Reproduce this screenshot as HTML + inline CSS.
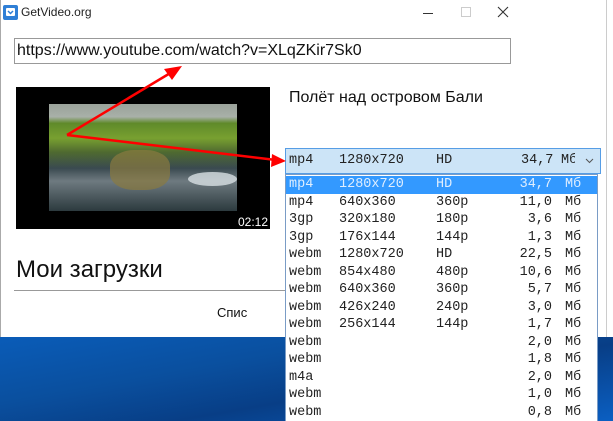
<!DOCTYPE html>
<html><head><meta charset="utf-8"><style>
*{margin:0;padding:0;box-sizing:border-box}
body{width:613px;height:421px;position:relative;overflow:hidden;background:#fff;font-family:"Liberation Sans",sans-serif}
.a{position:absolute;white-space:nowrap}
.desk{position:absolute;left:0;top:337px;width:613px;height:84px;background:linear-gradient(170deg,#0a5cb8 0%,#0a4f9e 35%,#083e86 60%,#0b5fc2 100%)}
.mono{font-family:"Liberation Mono",monospace;font-size:13.5px;color:#222}
.row{position:absolute;left:0;width:311px;height:17.5px;line-height:17.5px}
.row span{position:absolute}
</style></head><body>
<div class="desk"></div>
<div class="a" style="left:0;top:0;width:1px;height:337px;background:#aaa"></div>
<div class="a" style="left:606px;top:0;width:1px;height:337px;background:#ccc"></div>
<!-- title bar -->
<div class="a" style="left:3px;top:5px;width:15px;height:15px;background:#2f7fd6;border-radius:2px"></div>
<svg class="a" style="left:3px;top:5px" width="15" height="15"><rect x="3" y="3" width="9" height="8" fill="#fff" rx="1"/><path d="M5 6l2.5 2.5L10 6" stroke="#2f7fd6" stroke-width="1.5" fill="none"/></svg>
<div class="a" style="left:21px;top:5px;font-size:12px;color:#222">GetVideo.org</div>
<div class="a" style="left:423px;top:13px;width:10px;height:1px;background:#333"></div>
<div class="a" style="left:461px;top:7px;width:10px;height:10px;border:1px solid #ccc"></div>
<svg class="a" style="left:497px;top:6px" width="12" height="12"><path d="M1 1L11 11M11 1L1 11" stroke="#333" stroke-width="1.1"/></svg>
<!-- url -->
<div class="a" style="left:14px;top:38px;width:497px;height:26px;border:1px solid #999;font-size:16px;line-height:24px;padding-left:2px;color:#111">https://www.youtube.com/watch?v=XLqZKir7Sk0</div>
<!-- thumbnail -->
<div class="a" style="left:16px;top:87px;width:254px;height:142px;background:#000"></div>
<div class="a" style="left:49px;top:104px;width:188px;height:107px;background:linear-gradient(180deg,#9aa29a 0%,#a8b0a8 12%,#5f8a2a 18%,#78a030 32%,#4f6a30 45%,#3a4a50 60%,#6e7a80 72%,#2c3a3e 100%)"></div>
<div class="a" style="left:110px;top:150px;width:60px;height:40px;background:#8a7a40;border-radius:40%;opacity:.7"></div>
<div class="a" style="left:188px;top:172px;width:49px;height:14px;background:#d8e0e4;border-radius:50%;opacity:.8"></div>
<div class="a" style="left:238px;top:215px;font-size:12px;color:#fff">02:12</div>
<div class="a" style="left:289px;top:89px;font-size:16px;color:#111">Полёт над островом Бали</div>
<div class="a" style="left:16px;top:256px;font-size:24px;color:#111">Мои загрузки</div>
<div class="a" style="left:14px;top:290px;width:280px;height:1px;background:#999"></div>
<div class="a" style="left:217px;top:305px;font-size:13px;color:#111">Спис</div>
<!-- combobox -->
<div class="a mono" style="left:285px;top:148px;width:316px;height:26px;background:#cce4f7;border:1px solid #569de5;overflow:hidden">
<span class="a" style="left:3px;top:4px">mp4</span><span class="a" style="left:53px;top:4px">1280x720</span><span class="a" style="left:150px;top:4px">HD</span><span class="a" style="left:235px;top:4px">34,7</span><span class="a" style="left:275px;top:4px;width:14px;overflow:hidden">Мб</span>
<svg class="a" style="left:299px;top:9px" width="9" height="6"><path d="M1 1l3.5 3.5L8 1" stroke="#555" fill="none"/></svg>
</div>
<!-- list -->
<div class="a mono" style="left:285px;top:174px;width:313px;height:247px;background:#fff;border:1px solid #7a9cc6;border-bottom:none">
<div class="row" style="top:1px;background:#3399ff;color:#dfeeff"><span style="left:3px">mp4</span><span style="left:53px">1280x720</span><span style="left:150px">HD</span><span style="right:45px">34,7</span><span style="left:279px">Мб</span></div>
<div class="row" style="top:18.5px"><span style="left:3px">mp4</span><span style="left:53px">640x360</span><span style="left:150px">360p</span><span style="right:45px">11,0</span><span style="left:279px">Мб</span></div>
<div class="row" style="top:36px"><span style="left:3px">3gp</span><span style="left:53px">320x180</span><span style="left:150px">180p</span><span style="right:45px">3,6</span><span style="left:279px">Мб</span></div>
<div class="row" style="top:53.5px"><span style="left:3px">3gp</span><span style="left:53px">176x144</span><span style="left:150px">144p</span><span style="right:45px">1,3</span><span style="left:279px">Мб</span></div>
<div class="row" style="top:71px"><span style="left:3px">webm</span><span style="left:53px">1280x720</span><span style="left:150px">HD</span><span style="right:45px">22,5</span><span style="left:279px">Мб</span></div>
<div class="row" style="top:88.5px"><span style="left:3px">webm</span><span style="left:53px">854x480</span><span style="left:150px">480p</span><span style="right:45px">10,6</span><span style="left:279px">Мб</span></div>
<div class="row" style="top:106px"><span style="left:3px">webm</span><span style="left:53px">640x360</span><span style="left:150px">360p</span><span style="right:45px">5,7</span><span style="left:279px">Мб</span></div>
<div class="row" style="top:123.5px"><span style="left:3px">webm</span><span style="left:53px">426x240</span><span style="left:150px">240p</span><span style="right:45px">3,0</span><span style="left:279px">Мб</span></div>
<div class="row" style="top:141px"><span style="left:3px">webm</span><span style="left:53px">256x144</span><span style="left:150px">144p</span><span style="right:45px">1,7</span><span style="left:279px">Мб</span></div>
<div class="row" style="top:158.5px"><span style="left:3px">webm</span><span style="right:45px">2,0</span><span style="left:279px">Мб</span></div>
<div class="row" style="top:176px"><span style="left:3px">webm</span><span style="right:45px">1,8</span><span style="left:279px">Мб</span></div>
<div class="row" style="top:193.5px"><span style="left:3px">m4a</span><span style="right:45px">2,0</span><span style="left:279px">Мб</span></div>
<div class="row" style="top:211px"><span style="left:3px">webm</span><span style="right:45px">1,0</span><span style="left:279px">Мб</span></div>
<div class="row" style="top:228.5px"><span style="left:3px">webm</span><span style="right:45px">0,8</span><span style="left:279px">Мб</span></div>
</div>
<!-- arrows -->
<svg class="a" style="left:0;top:0" width="613" height="421">
<path d="M67 135L172 72M67 135L276 160" stroke="#f00" stroke-width="2.5" fill="none"/>
<path d="M182 66L164 69L172 80Z" fill="#f00"/>
<path d="M286 161L272 154L271 167Z" fill="#f00"/>
</svg>
</body></html>
